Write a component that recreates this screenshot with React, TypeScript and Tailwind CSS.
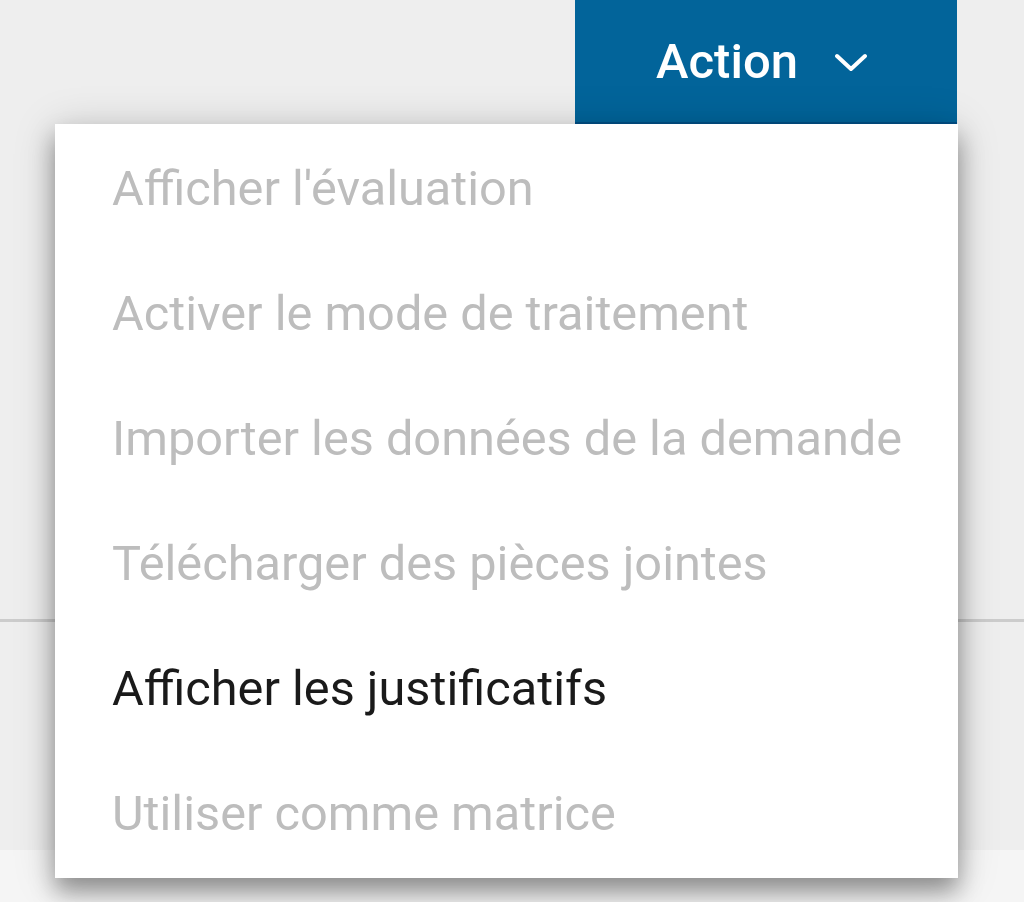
import React from "react";

const items: { label: string; active?: boolean }[] = [
  { label: "Afficher l'évaluation" },
  { label: "Activer le mode de traitement" },
  { label: "Importer les données de la demande" },
  { label: "Télécharger des pièces jointes" },
  { label: "Afficher les justificatifs", active: true },
  { label: "Utiliser comme matrice" },
];

export default function App() {
  return (
    <div
      className="relative w-[1024px] h-[902px] overflow-hidden bg-[#eeeeee]"
      style={{ fontFamily: "Roboto, 'Noto Sans', sans-serif" }}
    >
      <div className="flex flex-col h-full">
        <div className="flex h-[124px]">
          <div className="w-[575px]" />
          <button className="flex items-center justify-center gap-[37px] w-[382px] h-[124px] bg-[#02649a] border-b-2 border-[#014f86] text-white text-[49px] font-medium pr-[9px] pt-[2px]">
            <span>Action</span>
            <svg width="32" height="20" viewBox="0 0 32 20" fill="none">
              <polyline
                points="2,4 16,17 30,4"
                stroke="white"
                strokeWidth="4"
                strokeLinecap="round"
                strokeLinejoin="round"
              />
            </svg>
          </button>
        </div>
        <div className="h-[495px]" />
        <div className="h-[3px] bg-[#cccccc]" />
        <div className="h-[228px]" />
        <div className="flex-1 bg-[#f5f5f5]" />
      </div>

      <div className="absolute left-[55px] top-[124px] w-[903px] h-[754px] bg-white pt-[2px] shadow-[0_14px_22px_rgba(0,0,0,0.35),0_4px_40px_rgba(0,0,0,0.18)]">
        {items.map((it) => (
          <div
            key={it.label}
            className={`flex items-center h-[125px] pl-[57px] text-[48.7px] ${
              it.active ? "text-[#1a1a1a]" : "text-[#bdbdbd]"
            }`}
          >
            {it.label}
          </div>
        ))}
      </div>
    </div>
  );
}
